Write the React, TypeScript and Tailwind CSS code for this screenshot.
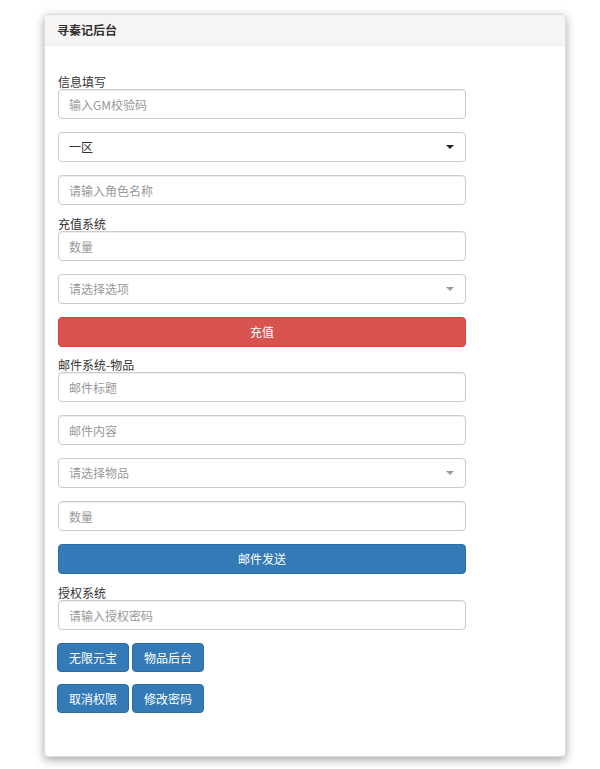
import React from 'react';

const font = { fontFamily: '"Noto Sans CJK SC", "Noto Sans", sans-serif' };

const Label: React.FC<{ text: string; gap?: string }> = ({ text, gap = 'mt-[13px]' }) => (
  <div className={`${gap} h-[13px] text-[12px] leading-[11px] text-[#333]`}>{text}</div>
);

const Input: React.FC<{ placeholder: string; gap?: boolean }> = ({ placeholder, gap }) => (
  <input
    placeholder={placeholder}
    className={`${gap ? 'mt-[13px]' : ''} block w-[408px] h-[30px] px-[10px] text-[12px] text-[#555] bg-white border border-[#ccc] rounded-[4px] shadow-[inset_0_1px_1px_rgba(0,0,0,0.075)] outline-none placeholder:text-[#999]`}
    style={font}
  />
);

const Select: React.FC<{ value: string; muted?: boolean }> = ({ value, muted }) => (
  <div className="relative mt-[13px] w-[408px] h-[30px]">
    <select
      defaultValue={value}
      className={`block w-full h-full pl-[10px] pr-[24px] text-[12px] ${muted ? 'text-[#999]' : 'text-[#333]'} bg-white border border-[#ccc] rounded-[4px] appearance-none outline-none`}
      style={font}
    >
      <option value={value}>{value}</option>
    </select>
    <span
      className={`pointer-events-none absolute right-[12px] top-[13px] w-0 h-0 border-l-[4px] border-r-[4px] border-t-[4px] border-l-transparent border-r-transparent ${muted ? 'border-t-[#999]' : 'border-t-[#222]'}`}
    />
  </div>
);

const SmallBtn: React.FC<{ text: string }> = ({ text }) => (
  <button className="h-[29px] w-[72px] text-[12px] text-white bg-[#337ab7] border border-[#2e6da4] rounded-[4px]" style={font}>
    {text}
  </button>
);

export default function App() {
  return (
    <div className="min-h-screen bg-white pt-[14px] pl-[44px]" style={font}>
      <div className="w-[522px] h-[743px] bg-white border border-[#ddd] rounded-[4px] shadow-[0_3px_10px_rgba(0,0,0,0.35)] overflow-hidden">
        <div className="h-[31px] bg-[#f5f5f5] border-b border-[#eee] pl-[12px] flex items-center text-[12px] font-bold text-[#333]">
          寻秦记后台
        </div>
        <div className="px-[13px] pt-[30px]">
          <Label text="信息填写" gap="" />
          <Input placeholder="输入GM校验码" />
          <Select value="一区" />
          <Input placeholder="请输入角色名称" gap />

          <Label text="充值系统" />
          <Input placeholder="数量" />
          <Select value="请选择选项" muted />
          <button className="mt-[13px] block w-[408px] h-[30px] text-[12px] text-white bg-[#d9534f] border border-[#d43f3a] rounded-[4px]" style={font}>
            充值
          </button>

          <Label text="邮件系统-物品" gap="mt-[12px]" />
          <Input placeholder="邮件标题" />
          <Input placeholder="邮件内容" gap />
          <Select value="请选择物品" muted />
          <Input placeholder="数量" gap />
          <button className="mt-[13px] block w-[408px] h-[30px] text-[12px] text-white bg-[#337ab7] border border-[#2e6da4] rounded-[4px]" style={font}>
            邮件发送
          </button>

          <Label text="授权系统" />
          <Input placeholder="请输入授权密码" />
          <div className="mt-[13px] flex gap-[3px] -ml-[1px]">
            <SmallBtn text="无限元宝" />
            <SmallBtn text="物品后台" />
          </div>
          <div className="mt-[12px] flex gap-[3px] -ml-[1px]">
            <SmallBtn text="取消权限" />
            <SmallBtn text="修改密码" />
          </div>
        </div>
      </div>
    </div>
  );
}
